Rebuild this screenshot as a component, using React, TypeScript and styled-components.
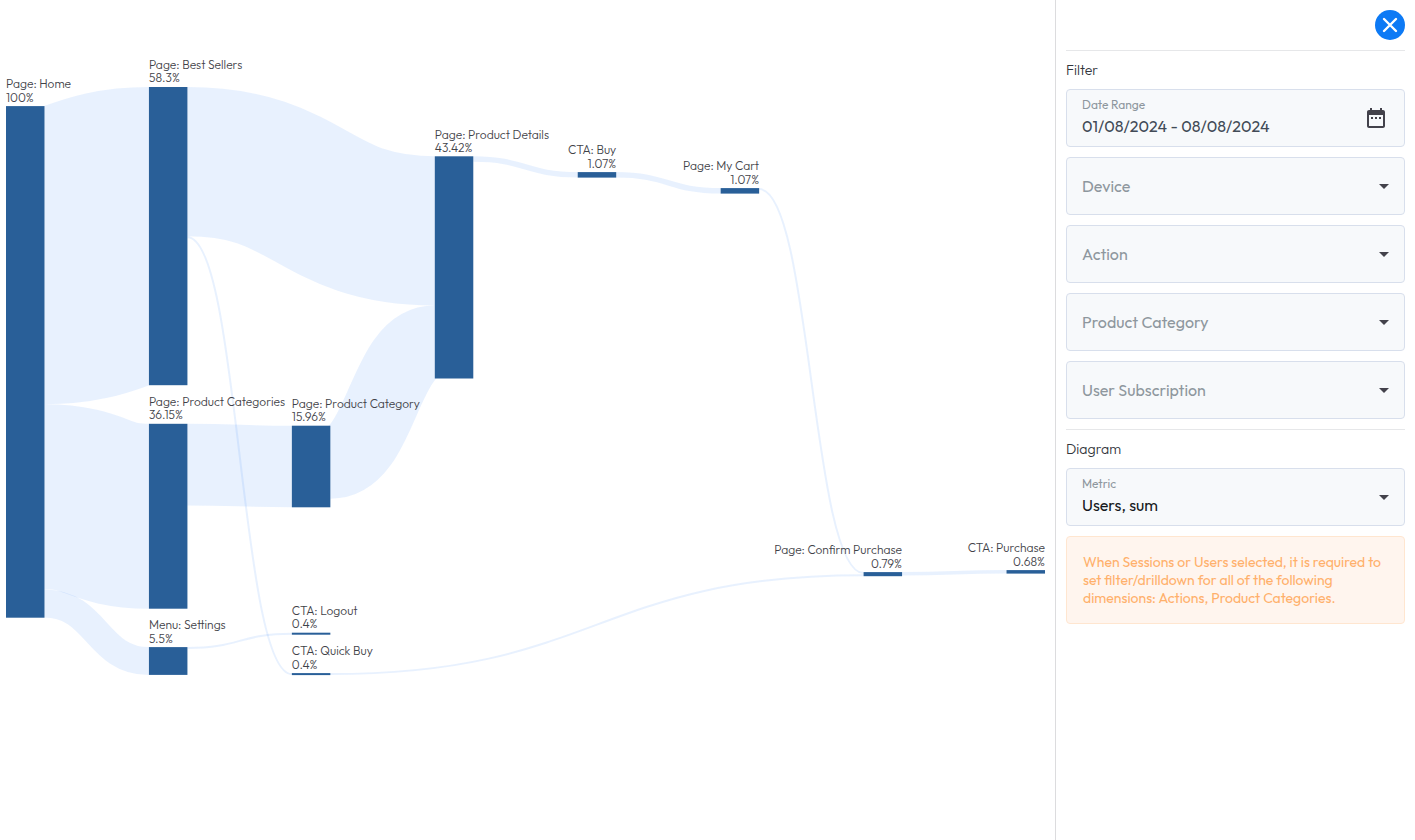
import React, { useId } from 'react';
import styled, { createGlobalStyle } from 'styled-components';

const GlobalStyle = createGlobalStyle`
  *, *::before, *::after { box-sizing: border-box; }
  body {
    margin: 0;
    background: #fff;
    color: #43474e;
    font-family: Outfit, Lato, sans-serif;
    font-size: 14px;
  }
`;

const Page = styled.div`
  display: flex;
  min-height: 100vh;
`;

const ChartArea = styled.main`
  flex: 1;
  min-width: 0;
`;

const Chart = styled.svg`
  display: block;
  width: 100%;
  height: auto;
`;

const LinkPath = styled.path`
  fill: none;
  stroke: #2078fa;
  stroke-opacity: 0.1;
`;

const NodeBar = styled.rect`
  fill: #295f98;
`;

const NodeLabel = styled.text`
  fill: #3f4248;
  font-size: 12px;
  font-weight: 300;
`;

const Sidebar = styled.aside`
  flex: 0 0 360px;
  padding: 10px;
  border-left: 1px solid #dcdcde;
`;

const Header = styled.header`
  display: flex;
  justify-content: flex-end;
  padding-bottom: 10px;
`;

const CloseButton = styled.button`
  display: flex;
  align-items: center;
  justify-content: center;
  width: 30px;
  height: 30px;
  padding: 0;
  border: 0;
  border-radius: 50%;
  background: #0d7af5;
  cursor: pointer;
`;

const Section = styled.section`
  display: flex;
  flex-direction: column;
  gap: 10px;
  padding: 10px 0;
  border-top: 1px solid #e6e7e9;
`;

const SectionTitle = styled.h2`
  margin: 0;
  color: #32363c;
  font-size: 14px;
  font-weight: 300;
  line-height: 18px;
`;

const Field = styled.div`
  display: grid;
  align-items: center;
  height: 58px;
  border: 1px solid #d8dfec;
  border-radius: 4px;
  background: #f7f9fb;

  > * { grid-area: 1 / 1; }
`;

const FieldLabel = styled.label<{ $raised?: boolean }>`
  align-self: ${(p) => (p.$raised ? 'start' : 'center')};
  padding: ${(p) => (p.$raised ? '7px' : '0')} 15px 0;
  color: #8e979e;
  font-size: ${(p) => (p.$raised ? 12 : 16)}px;
  line-height: ${(p) => (p.$raised ? 16 : 20)}px;
  pointer-events: none;
`;

const controlStyle = `
  width: 100%;
  height: 100%;
  margin: 0;
  padding: 16px 48px 0 15px;
  border: 0;
  border-radius: 4px;
  background: transparent;
  font: inherit;
  font-size: 16px;
  line-height: 20px;
  appearance: none;
`;

const Select = styled.select`
  ${controlStyle}
  color: #16191d;
`;

const DateInput = styled.input`
  ${controlStyle}
  color: #424b57;
`;

const IconButton = styled.button`
  display: flex;
  justify-self: end;
  margin-right: 16px;
  padding: 0;
  border: 0;
  background: none;
  color: #43424b;
  cursor: pointer;
`;

const Arrow = styled.svg`
  justify-self: end;
  margin-right: 15px;
  fill: #43424b;
  pointer-events: none;
`;

const Notice = styled.p`
  margin: 0;
  padding: 16px;
  border: 1px solid #ffe6d0;
  border-radius: 4px;
  background: #fff5ee;
  color: #ffb06b;
  font-size: 14px;
  line-height: 18px;
`;

const NODE_WIDTH = 38.5;
const columnX = (column: number) => 6 + column * 142.93;

interface SankeyNode {
  name: string;
  value: string;
  column: number;
  top: number;
  size: number;
}

const nodes: Record<string, SankeyNode> = {
  home: { name: 'Page: Home', value: '100%', column: 0, top: 106.1, size: 511.6 },
  best: { name: 'Page: Best Sellers', value: '58.3%', column: 1, top: 87, size: 298.2 },
  categories: { name: 'Page: Product Categories', value: '36.15%', column: 1, top: 423.8, size: 184.9 },
  settings: { name: 'Menu: Settings', value: '5.5%', column: 1, top: 647.1, size: 27.8 },
  category: { name: 'Page: Product Category', value: '15.96%', column: 2, top: 425.7, size: 81.6 },
  logout: { name: 'CTA: Logout', value: '0.4%', column: 2, top: 632.7, size: 2 },
  quickBuy: { name: 'CTA: Quick Buy', value: '0.4%', column: 2, top: 673.1, size: 2 },
  details: { name: 'Page: Product Details', value: '43.42%', column: 3, top: 156.3, size: 222.2 },
  buy: { name: 'CTA: Buy', value: '1.07%', column: 4, top: 172.1, size: 5.5 },
  cart: { name: 'Page: My Cart', value: '1.07%', column: 5, top: 188.1, size: 5.5 },
  confirm: { name: 'Page: Confirm Purchase', value: '0.79%', column: 6, top: 572.1, size: 4.1 },
  purchase: { name: 'CTA: Purchase', value: '0.68%', column: 7, top: 570.1, size: 3.5 },
};

interface SankeyLink {
  from: string;
  to: string;
  size: number;
  fromOffset?: number;
  toOffset?: number;
}

const links: SankeyLink[] = [
  { from: 'home', to: 'best', size: 298.2 },
  { from: 'home', to: 'categories', size: 184.9, fromOffset: 298.2 },
  { from: 'home', to: 'settings', size: 28, fromOffset: 483.4 },
  { from: 'best', to: 'details', size: 149.2 },
  { from: 'best', to: 'quickBuy', size: 2, fromOffset: 149.2 },
  { from: 'categories', to: 'category', size: 81.6 },
  { from: 'settings', to: 'logout', size: 2 },
  { from: 'category', to: 'details', size: 73, toOffset: 149.2 },
  { from: 'details', to: 'buy', size: 5.5 },
  { from: 'buy', to: 'cart', size: 5.5 },
  { from: 'cart', to: 'confirm', size: 2 },
  { from: 'quickBuy', to: 'confirm', size: 2, toOffset: 2.1 },
  { from: 'confirm', to: 'purchase', size: 3.5 },
];

function linkPath({ from, to, size, fromOffset = 0, toOffset = 0 }: SankeyLink) {
  const x0 = columnX(nodes[from].column) + NODE_WIDTH;
  const x1 = columnX(nodes[to].column);
  const y0 = nodes[from].top + fromOffset + size / 2;
  const y1 = nodes[to].top + toOffset + size / 2;
  const mid = (x0 + x1) / 2;
  return `M${x0},${y0}C${mid},${y0} ${mid},${y1} ${x1},${y1}`;
}

function Sankey() {
  return (
    <Chart viewBox="0 0 1055 840" role="img" aria-label="User flow diagram">
      {links.map((link) => (
        <LinkPath key={`${link.from}-${link.to}`} d={linkPath(link)} strokeWidth={link.size} />
      ))}
      {Object.entries(nodes).map(([id, node]) => {
        const x = columnX(node.column);
        const alignEnd = node.column > 3;
        const labelX = alignEnd ? x + NODE_WIDTH : x;
        const anchor = alignEnd ? 'end' : 'start';
        return (
          <g key={id}>
            <NodeBar x={x} y={node.top} width={NODE_WIDTH} height={node.size} />
            <NodeLabel x={labelX} y={Math.round(node.top - 17.7)} textAnchor={anchor}>{node.name}</NodeLabel>
            <NodeLabel x={labelX} y={Math.round(node.top - 4.55)} textAnchor={anchor}>{node.value}</NodeLabel>
          </g>
        );
      })}
    </Chart>
  );
}

function SelectField({ label, value }: { label: string; value?: string }) {
  const id = useId();
  return (
    <Field>
      <Select id={id} defaultValue={value ?? ''}>
        {value ? <option value={value}>{value}</option> : <option value="" />}
      </Select>
      <FieldLabel htmlFor={id} $raised={Boolean(value)}>{label}</FieldLabel>
      <Arrow width="10" height="5" viewBox="0 0 10 5" aria-hidden="true">
        <path d="M0 0h10L5 5z" />
      </Arrow>
    </Field>
  );
}

function DateField({ label, value }: { label: string; value: string }) {
  const id = useId();
  return (
    <Field>
      <DateInput id={id} type="text" defaultValue={value} />
      <FieldLabel htmlFor={id} $raised>{label}</FieldLabel>
      <IconButton type="button" aria-label="Open calendar">
        <svg width="24" height="24" viewBox="0 0 24 24" fill="currentColor" aria-hidden="true">
          <path d="M9 11H7v2h2v-2zm4 0h-2v2h2v-2zm4 0h-2v2h2v-2zm2-7h-1V2h-2v2H8V2H6v2H5c-1.1 0-2 .9-2 2v14c0 1.1.9 2 2 2h14c1.1 0 2-.9 2-2V6c0-1.1-.9-2-2-2zm0 16H5V9h14v11z" />
        </svg>
      </IconButton>
    </Field>
  );
}

export default function App() {
  return (
    <>
      <GlobalStyle />
      <Page>
        <ChartArea>
          <Sankey />
        </ChartArea>
        <Sidebar>
          <Header>
            <CloseButton type="button" aria-label="Close">
              <svg width="16" height="16" viewBox="0 0 16 16" fill="none" stroke="#fff" strokeWidth="2.4" strokeLinecap="round" aria-hidden="true">
                <path d="M2 2l12 12M14 2L2 14" />
              </svg>
            </CloseButton>
          </Header>
          <Section>
            <SectionTitle>Filter</SectionTitle>
            <DateField label="Date Range" value="01/08/2024 - 08/08/2024" />
            <SelectField label="Device" />
            <SelectField label="Action" />
            <SelectField label="Product Category" />
            <SelectField label="User Subscription" />
          </Section>
          <Section>
            <SectionTitle>Diagram</SectionTitle>
            <SelectField label="Metric" value="Users, sum" />
            <Notice>
              When Sessions or Users selected, it is required to set filter/drilldown for all of the
              following dimensions: Actions, Product Categories.
            </Notice>
          </Section>
        </Sidebar>
      </Page>
    </>
  );
}
